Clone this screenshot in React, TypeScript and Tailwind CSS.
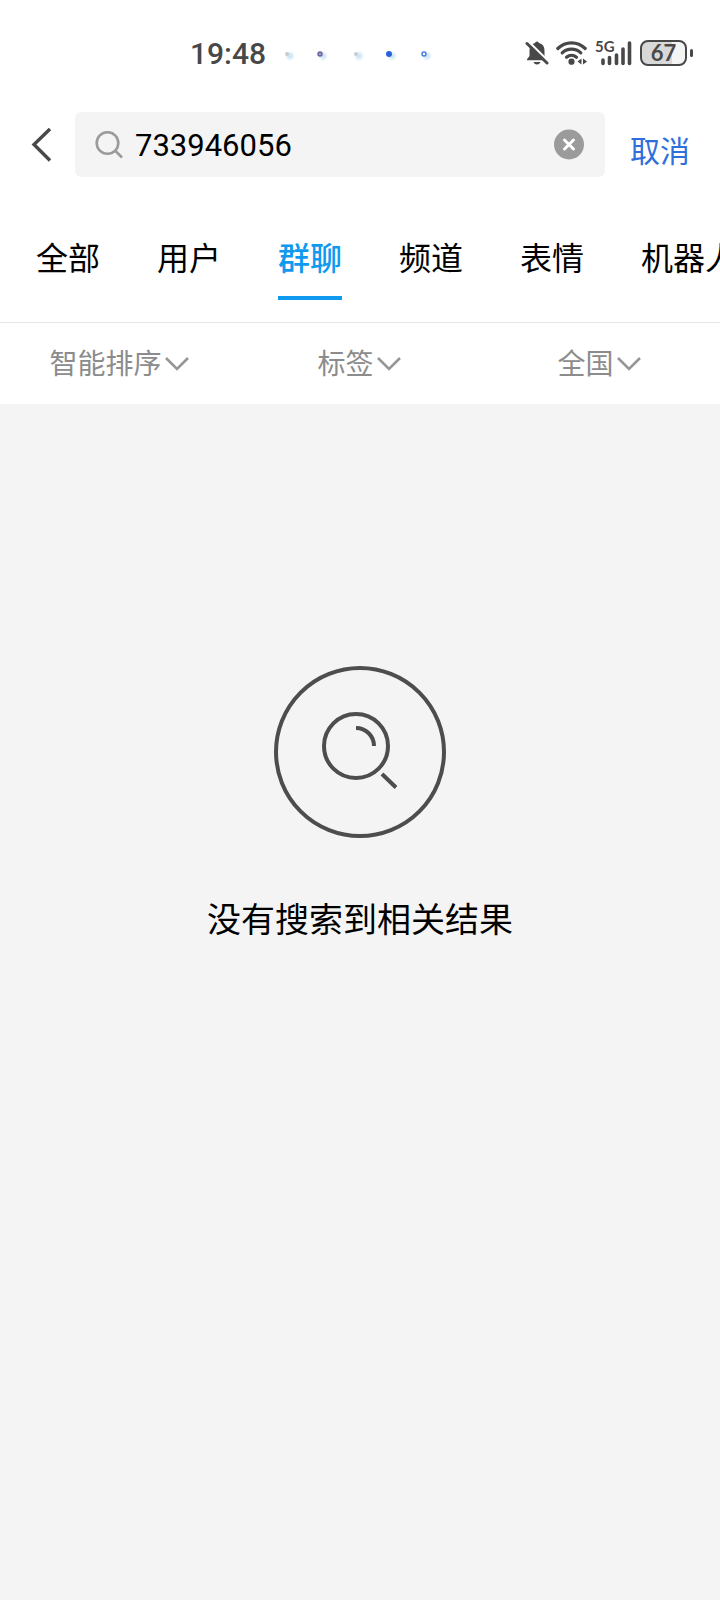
import { useRef, useState } from "react";

const TABS = ["全部", "用户", "群聊", "频道", "表情", "机器人"];

const FILTERS = [
  { id: "sort", label: "排序方式", options: ["智能排序"] },
  { id: "tag", label: "群标签", options: ["标签"] },
  { id: "region", label: "地区", options: ["全国"] },
];

const NOTIFICATIONS = [
  { x: 9, fill: "#c3cdd0", stroke: "none", r: 2 },
  { x: 42, fill: "#a39cc0", stroke: "#6a5f9c", r: 2 },
  { x: 78, fill: "#c8ced0", stroke: "none", r: 2 },
  { x: 111, fill: "#2b62dc", stroke: "none", r: 3 },
  { x: 146, fill: "#ffffff", stroke: "#3f7be0", r: 2 },
];

function NotificationDots() {
  return (
    <svg width="160" height="20" viewBox="0 0 160 20" aria-hidden="true">
      <defs>
        <filter id="dot-glow" x="-50%" y="-50%" width="200%" height="200%">
          <feGaussianBlur stdDeviation="1.2" />
        </filter>
      </defs>
      {NOTIFICATIONS.map(({ x, fill, stroke, r }) => (
        <g key={x}>
          <circle cx={x + 3} cy="12" r="3.4" fill="#cfe6f6" filter="url(#dot-glow)" />
          <circle cx={x} cy="10" r={r} fill={fill} stroke={stroke} strokeWidth="1.4" />
        </g>
      ))}
    </svg>
  );
}

function BellOffIcon() {
  return (
    <svg width="24" height="26" viewBox="0 0 24 26" aria-hidden="true">
      <path
        d="M12 1.5a2 2 0 0 1 2 1.500c3.600.9 5.500 3.600 5.500 7.500v5.500l2.500 3.200v1H2v-1l2.500-3.200v-5.500c0-3.900 1.900-6.600 5.500-7.500a2 2 0 0 1 2-1.500Z"
        fill="#484848"
      />
      <path d="M8.500 22h7c-.7 1.700-2 2.500-3.500 2.500s-2.800-.8-3.500-2.500Z" fill="#484848" />
      <path d="M3.500 1.500 24 22" stroke="#ffffff" strokeWidth="2.400" />
      <path d="M2 3.500 22 23" stroke="#484848" strokeWidth="3" strokeLinecap="round" />
    </svg>
  );
}

function WifiIcon() {
  return (
    <svg width="32" height="26" viewBox="0 0 32 26" fill="none" aria-hidden="true">
      <g stroke="#484848" strokeWidth="3.200" strokeLinecap="round">
        <path d="M1.800 8.500C9.500.9 21.500.9 29.200 8.500" />
        <path d="M6.200 12.900c5.400-5 13.200-5 18.600 0" />
        <path d="M10.500 17.200c3-2.600 7-2.600 10 0" />
      </g>
      <circle cx="15.500" cy="21.700" r="3.100" fill="#484848" />
      <path d="M25.500 18.500v6L21.500 21.500Z M27 18.500v6l4-3Z" fill="#484848" />
    </svg>
  );
}

function SignalIcon() {
  return (
    <svg
      width="38"
      height="26"
      viewBox="0 0 38 26"
      className="overflow-visible"
      role="img"
      aria-label="5G"
    >
      <text
        x="0"
        y="12"
        fontFamily="Lato, 'Liberation Sans', sans-serif"
        fontSize="15"
        fontWeight="700"
        fill="#484848"
      >
        5G
      </text>
      <g stroke="#484848" strokeWidth="3.600" strokeLinecap="round">
        <path d="M8 20v3.500" />
        <path d="M14.500 17.500v6" />
        <path d="M21.500 15v8.500" />
        <path d="M28 9v14.500" />
        <path d="M34.500 3v20.500" />
      </g>
    </svg>
  );
}

function StatusBar() {
  return (
    <div className="flex h-26 items-center pt-1 pr-[27px] pl-[190px] text-[#484848]">
      <span className="text-[30px] leading-10 font-medium">19:48</span>
      <span className="ml-3">
        <NotificationDots />
      </span>
      <div className="ml-auto flex items-center gap-[7px] pb-0.5">
        <BellOffIcon />
        <WifiIcon />
        <SignalIcon />
        <div className="flex items-center gap-[3px]">
          <span className="flex h-[26px] w-[47px] items-center justify-center rounded-lg border-2 border-[#484848] bg-linear-to-r from-[#d8d8d8] from-70% to-[#f4f4f4] to-70% font-[Lato,sans-serif] text-[22px] leading-none font-bold">
            67
          </span>
          <span className="h-2 w-[3px] rounded-full bg-[#484848]" />
        </div>
      </div>
    </div>
  );
}

function SearchBar() {
  const inputRef = useRef<HTMLInputElement>(null);
  const [query, setQuery] = useState("733946056");

  const clear = () => {
    setQuery("");
    inputRef.current?.focus();
  };

  return (
    <form
      role="search"
      className="flex items-center px-[30px] pt-2"
      onSubmit={(event) => event.preventDefault()}
    >
      <button type="button" aria-label="返回" className="mr-[21px] shrink-0">
        <svg width="24" height="38" viewBox="0 0 24 38" fill="none" aria-hidden="true">
          <path d="M20 3 4 18.500l16 16" stroke="#484848" strokeWidth="3.400" />
        </svg>
      </button>
      <div className="flex h-[65px] min-w-0 flex-1 items-center rounded-md bg-[#f4f4f4] px-5">
        <svg width="28" height="28" viewBox="0 0 28 28" fill="none" className="shrink-0" aria-hidden="true">
          <circle cx="12.500" cy="12" r="10.800" stroke="#9b9b9b" strokeWidth="2.600" />
          <path d="m20 19.500 7 7" stroke="#9b9b9b" strokeWidth="2.600" />
        </svg>
        <input
          ref={inputRef}
          type="text"
          aria-label="搜索"
          value={query}
          onChange={(event) => setQuery(event.target.value)}
          className="ml-3 min-w-0 flex-1 bg-transparent pt-0.5 text-[31px] leading-10 text-black outline-none"
        />
        <button type="button" aria-label="清除" onClick={clear} className="shrink-0">
          <svg width="32" height="32" viewBox="0 0 32 32" aria-hidden="true">
            <circle cx="16" cy="15.500" r="15" fill="#9b9b9b" />
            <path d="m11.500 11 9 9m0-9-9 9" stroke="#ffffff" strokeWidth="3" strokeLinecap="round" />
          </svg>
        </button>
      </div>
      <button type="button" className="ml-[25px] shrink-0 self-end text-[30px] leading-[50px] text-[#2f6fdb]">
        取消
      </button>
    </form>
  );
}

function CategoryTabs() {
  const [active, setActive] = useState("群聊");

  return (
    <div
      role="tablist"
      className="flex gap-[57px] overflow-hidden border-b border-[#e5e5e5] pt-[57px] pb-[22px] pl-9"
    >
      {TABS.map((tab) => (
        <button
          key={tab}
          type="button"
          role="tab"
          aria-selected={tab === active}
          onClick={() => setActive(tab)}
          className={`shrink-0 border-b-4 pb-3 text-[32px] leading-[50px] whitespace-nowrap ${
            tab === active
              ? "border-[#0f9af0] font-medium text-[#0f9af0]"
              : "border-transparent text-black"
          }`}
        >
          {tab}
        </button>
      ))}
    </div>
  );
}

function FilterBar() {
  return (
    <div className="grid h-[81px] grid-cols-3 items-center justify-items-center">
      {FILTERS.map(({ id, label, options }) => (
        <div key={id} className="relative">
          <select
            aria-label={label}
            className="block appearance-none bg-transparent pt-0.5 pr-7 text-[28px] leading-10 text-[#8c8c8c] outline-none"
          >
            {options.map((option) => (
              <option key={option}>{option}</option>
            ))}
          </select>
          <svg
            width="26"
            height="16"
            viewBox="0 0 26 16"
            fill="none"
            className="pointer-events-none absolute top-1/2 right-0 -translate-y-1/2"
            aria-hidden="true"
          >
            <path d="m1 2 11 11L23 2" stroke="#969696" strokeWidth="2.600" />
          </svg>
        </div>
      ))}
    </div>
  );
}

function EmptyResult() {
  return (
    <main className="flex flex-col items-center pt-[262px]">
      <svg width="172" height="172" viewBox="0 0 172 172" fill="none" aria-hidden="true">
        <g stroke="#4d4d4d" strokeWidth="4">
          <circle cx="86" cy="86" r="84" />
          <circle cx="82" cy="80" r="32" />
          <path d="M82 62a18 18 0 0 1 18 18" />
          <path d="m108 108 14 13.500" />
        </g>
      </svg>
      <p className="mt-[58px] text-[34px] leading-12 text-black">没有搜索到相关结果</p>
    </main>
  );
}

export default function App() {
  return (
    <div
      lang="zh-CN"
      className="min-h-screen overflow-hidden bg-[#f4f4f4] font-[Roboto,'Noto_Sans_CJK_SC',sans-serif]"
    >
      <header className="bg-white">
        <StatusBar />
        <SearchBar />
        <CategoryTabs />
        <FilterBar />
      </header>
      <EmptyResult />
    </div>
  );
}
